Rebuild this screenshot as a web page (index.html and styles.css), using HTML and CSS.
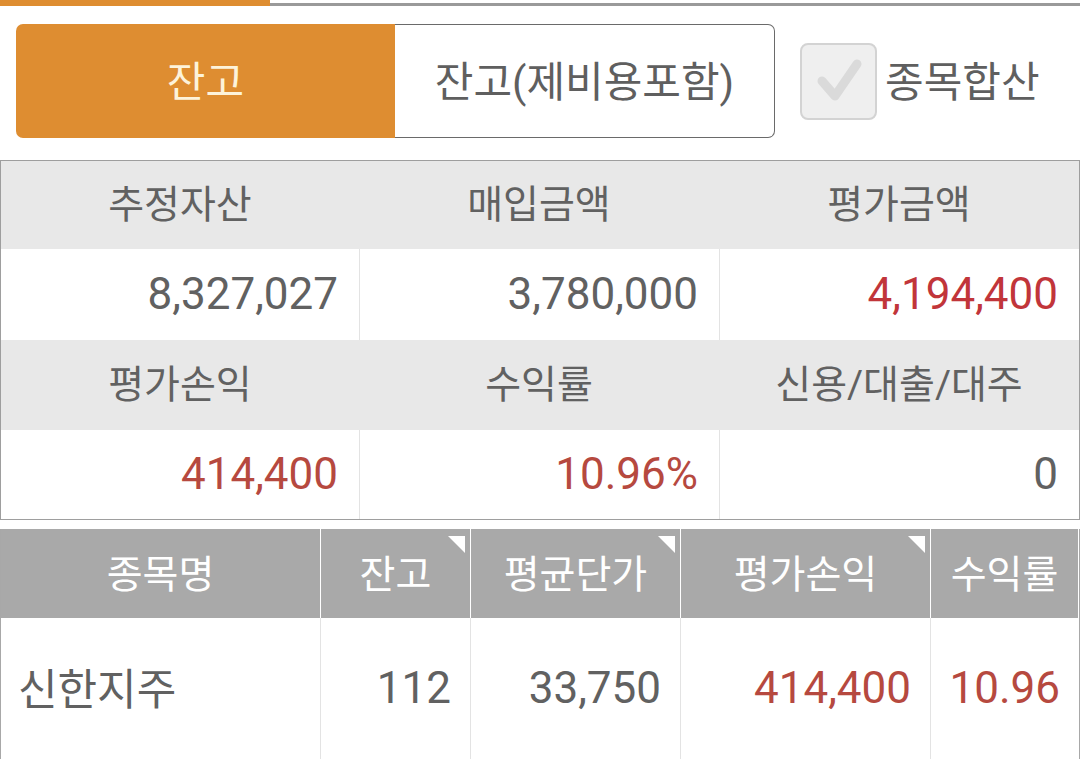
FILE: index.html
```html
<!DOCTYPE html>
<html lang="ko">
<head>
<meta charset="utf-8">
<title>잔고</title>
<link rel="stylesheet" href="styles.css">
</head>
<body>
<div class="topbar">
  <div class="tab-active"></div>
  <div class="tab-line"></div>
</div>

<div class="controls">
  <div class="segmented">
    <div class="seg seg-on">잔고</div>
    <div class="seg seg-off">잔고(제비용포함)</div>
  </div>
  <label class="check">
    <span class="check-box">
      <svg width="77" height="77" viewBox="0 0 77 77"><path d="M22 38 L35 53 L57 21" fill="none" stroke="#dadada" stroke-width="9" stroke-linecap="round" stroke-linejoin="round"/></svg>
    </span>
    <span class="check-label">종목합산</span>
  </label>
</div>

<div class="summary">
  <div class="s-head">추정자산</div>
  <div class="s-head">매입금액</div>
  <div class="s-head">평가금액</div>
  <div class="s-val">8,327,027</div>
  <div class="s-val s-div">3,780,000</div>
  <div class="s-val s-div red">4,194,400</div>
  <div class="s-head s-head2">평가손익</div>
  <div class="s-head s-head2">수익률</div>
  <div class="s-head s-head2">신용/대출/대주</div>
  <div class="s-val s-val2 red2">414,400</div>
  <div class="s-val s-val2 s-div red2">10.96%</div>
  <div class="s-val s-val2 s-div">0</div>
</div>

<div class="grid">
  <div class="g-head">종목명</div>
  <div class="g-head g-hdiv">잔고<span class="tri"></span></div>
  <div class="g-head g-hdiv">평균단가<span class="tri"></span></div>
  <div class="g-head g-hdiv">평가손익<span class="tri"></span></div>
  <div class="g-head g-hdiv">수익률</div>
  <div class="g-cell g-name">신한지주</div>
  <div class="g-cell g-num g-bdiv">112</div>
  <div class="g-cell g-num g-bdiv">33,750</div>
  <div class="g-cell g-num g-bdiv red2">414,400</div>
  <div class="g-cell g-num g-bdiv g-last red2">10.96</div>
</div>
</body>
</html>
```

FILE: styles.css
```css
* { box-sizing: border-box; }
html, body { margin: 0; padding: 0; background: #ffffff; }
body {
  width: 1080px;
  font-family: Roboto, "Noto Sans CJK KR", sans-serif;
  color: #616161;
  overflow: hidden;
}

.topbar { display: flex; height: 6px; }
.tab-active { width: 270px; height: 6px; background: #de8d31; }
.tab-line { flex: 1; height: 3px; align-self: flex-end; background: #9a9a9a; }

.controls {
  display: flex;
  align-items: center;
  padding: 18px 0 0 16px;
}
.segmented { display: flex; width: 759px; height: 114px; }
.seg {
  flex: 1;
  display: flex;
  align-items: center;
  justify-content: center;
  font-size: 42px;
  padding-bottom: 6px;
}
.seg-on {
  background: #de8d31;
  color: #fdf3da;
  border-radius: 7px 0 0 7px;
}
.seg-off {
  background: #fff;
  border: 1px solid #6a6a6a;
  border-left: none;
  border-radius: 0 7px 7px 0;
  color: #5f5f5f;
}

.check { display: flex; align-items: center; margin-left: 25px; }
.check-box {
  width: 77px; height: 77px;
  background: #efefef;
  border: 2px solid #d3d3d3;
  border-radius: 8px;
  display: flex;
  align-items: center;
  justify-content: center;
  overflow: hidden;
}
.check-box svg { display: block; flex: none; }
.check-label { font-size: 42px; margin-left: 8px; color: #5f5f5f; padding-bottom: 6px; }

.summary {
  margin-top: 22px;
  border: 1px solid #9e9e9e;
  display: grid;
  grid-template-columns: 358px 360px 360px;
  grid-template-rows: 88px 91px 90px 89px;
}
.s-head {
  background: #e8e8e8;
  display: flex;
  align-items: center;
  justify-content: center;
  font-size: 39px;
  padding-bottom: 8px;
}
.s-val {
  display: flex;
  align-items: center;
  justify-content: flex-end;
  padding-right: 21px;
  font-size: 44px;
  padding-bottom: 2px;
}
.s-div { border-left: 1px solid #e3e3e3; }
.red { color: #c1353a; }
.red2 { color: #b6493f; }

.grid {
  margin-top: 9px;
  border-left: 1px solid #a8a8a8;
  border-right: 1px solid #a8a8a8;
  display: grid;
  grid-template-columns: 319px 150px 210px 250px 148px;
  grid-template-rows: 89px 141px;
}
.g-head {
  position: relative;
  background: #a9a9a9;
  color: #ffffff;
  display: flex;
  align-items: center;
  justify-content: center;
  font-size: 39px;
  padding-bottom: 6px;
}
.g-hdiv { border-left: 1px solid #ffffff; }
.tri {
  position: absolute;
  top: 7px;
  right: 5px;
  width: 0;
  height: 0;
  border-top: 17px solid #ffffff;
  border-left: 17px solid transparent;
}
.g-cell {
  display: flex;
  align-items: center;
  font-size: 44px;
  padding-bottom: 2px;
}
.g-name { font-size: 43px; padding-left: 17px; padding-bottom: 6px; }
.g-num { justify-content: flex-end; padding-right: 19px; }
.g-last { padding-right: 18px; }
.g-bdiv { border-left: 1px solid #e3e3e3; }
```
